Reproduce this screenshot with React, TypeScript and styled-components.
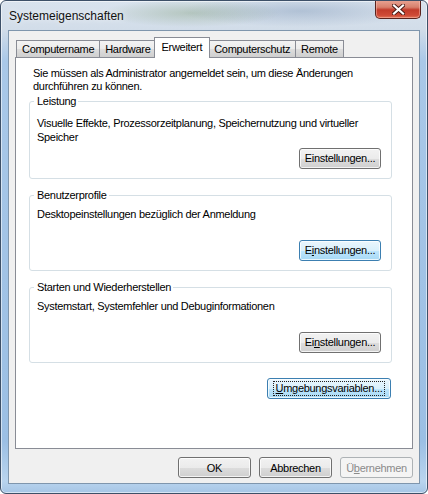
import React from "react";
import styled, { createGlobalStyle, css } from "styled-components";

const GlobalStyle = createGlobalStyle`
  html, body {
    margin: 0;
    padding: 0;
    background: #ffffff;
  }
  * {
    box-sizing: border-box;
  }
`;

const Window = styled.div`
  width: 428px;
  height: 494px;
  display: flex;
  flex-direction: column;
  border: 1px solid #3d5068;
  border-radius: 6px;
  padding: 0 7px 9px 7px;
  overflow: hidden;
  background:
    radial-gradient(ellipse 90px 14px at 190px 12px, rgba(120, 150, 110, 0.35), transparent),
    radial-gradient(ellipse 120px 16px at 300px 10px, rgba(90, 120, 160, 0.3), transparent),
    linear-gradient(to bottom, #d9e3ee 0px, #d2dde9 28px, #a9c8e8 60px, #9bbfe4 440px, #b9d4ee 480px, #a3c3e4 494px);
  box-shadow: inset 0 0 0 1px rgba(255, 255, 255, 0.55);
  font-family: "Liberation Sans", Arial, sans-serif;
  font-size: 11px;
  letter-spacing: -0.3px;
  color: #000;
`;

const TitleBar = styled.div`
  height: 29px;
  display: flex;
  align-items: flex-start;
  justify-content: space-between;
`;

const Title = styled.div`
  font-size: 12px;
  letter-spacing: 0;
  line-height: 14px;
  padding: 8px 0 0 1px;
  color: #111;
  text-shadow: 0 0 6px rgba(255, 255, 255, 0.9);
`;

const CloseButton = styled.div`
  width: 46px;
  height: 19px;
  margin-right: -1px;
  margin-top: -1px;
  display: flex;
  align-items: center;
  justify-content: center;
  border: 1px solid #5a231d;
  border-top: none;
  border-radius: 0 0 5px 5px;
  background: linear-gradient(to bottom, #eaa595 0%, #d8806c 40%, #c23b2a 55%, #cf4a36 85%, #e27658 100%);
  box-shadow: inset 0 0 0 1px rgba(255, 200, 190, 0.45);
`;

const ClientArea = styled.div`
  flex: 1;
  display: flex;
  flex-direction: column;
  background: #f0f0f0;
  border: 1px solid #7f96ad;
  padding: 6px 6px 5px 6px;
`;

const TabStrip = styled.div`
  height: 20px;
  display: flex;
  align-items: flex-end;
  padding-left: 1px;
`;

const Tab = styled.div<{ $active?: boolean }>`
  position: relative;
  height: 17px;
  margin-right: -1px;
  padding: 0 5px;
  display: flex;
  align-items: center;
  justify-content: center;
  border: 1px solid #898c95;
  border-bottom: none;
  background: linear-gradient(to bottom, #f3f3f3 0%, #ebebeb 50%, #dddddd 51%, #cfcfcf 100%);
  white-space: nowrap;
  ${(p) =>
    p.$active &&
    css`
      z-index: 2;
      height: 21px;
      margin: 0 -2px -1px -2px;
      padding: 0 7px 2px 7px;
      background: #ffffff;
    `}
`;

const Panel = styled.div`
  height: 392px;
  background: #ffffff;
  border: 1px solid #898c95;
  padding: 9px 20px 0 13px;
  display: flex;
  flex-direction: column;
`;

const Intro = styled.div`
  line-height: 13px;
  padding-left: 4px;
`;

const GroupBox = styled.div<{ $gapTop: number }>`
  margin-top: ${(p) => p.$gapTop}px;
  border: 1px solid #d5dfe5;
  border-radius: 3px;
  padding: 0 10px 9px 7px;
  display: flex;
  flex-direction: column;
`;

const Legend = styled.div`
  align-self: flex-start;
  margin: -8px 0 0 -3px;
  padding: 0 2px 0 3px;
  line-height: 14px;
  background: #ffffff;
`;

const Description = styled.div<{ $gap: number }>`
  margin-top: ${(p) => p.$gap}px;
  line-height: 14px;
`;

const ButtonRow = styled.div<{ $gap: number }>`
  margin-top: ${(p) => p.$gap}px;
  display: flex;
  justify-content: flex-end;
`;

const Button = styled.button<{ $width: number; $hot?: boolean }>`
  width: ${(p) => p.$width}px;
  height: 21px;
  padding: 0;
  font-family: inherit;
  font-size: 11px;
  letter-spacing: -0.3px;
  color: #000;
  border: 1px solid #707070;
  border-radius: 3px;
  background: linear-gradient(to bottom, #f2f2f2 0%, #ebebeb 50%, #dddddd 51%, #cfcfcf 100%);
  box-shadow: inset 0 0 0 1px rgba(255, 255, 255, 0.75);
  display: flex;
  align-items: center;
  justify-content: center;
  ${(p) =>
    p.$hot &&
    css`
      border-color: #3c7fb1;
      background: linear-gradient(to bottom, #eaf6fd 0%, #d9f0fc 50%, #bee6fd 51%, #a7d9f5 100%);
    `}
  &:disabled {
    color: #8b8b8b;
    border-color: #adb2b5;
    background: #f4f4f4;
    box-shadow: none;
  }
`;

const FocusLabel = styled.span<{ $focus?: boolean }>`
  padding: 0 2px;
  line-height: 13px;
  outline: ${(p) => (p.$focus ? "1px dotted #222" : "none")};
`;

const Key = styled.span`
  text-decoration: underline;
  text-underline-offset: 1px;
`;

const DialogButtons = styled.div`
  margin-top: 8px;
  display: flex;
  justify-content: flex-end;
  gap: 8px;
`;

const EnvRow = styled.div`
  margin-top: 15px;
  display: flex;
  justify-content: flex-end;
  padding-right: 1px;
`;

const CloseIcon = () => (
  <svg width="13" height="11" viewBox="0 0 13 11">
    <path
      d="M2 1.5 L11 9.5 M11 1.5 L2 9.5"
      stroke="#4a1a14"
      strokeWidth="4"
      strokeLinecap="square"
    />
    <path
      d="M2 1.5 L11 9.5 M11 1.5 L2 9.5"
      stroke="#ffffff"
      strokeWidth="2.2"
      strokeLinecap="square"
    />
  </svg>
);

const tabs = ["Computername", "Hardware", "Erweitert", "Computerschutz", "Remote"];

export default function App() {
  return (
    <>
      <GlobalStyle />
      <Window>
        <TitleBar>
          <Title>Systemeigenschaften</Title>
          <CloseButton>
            <CloseIcon />
          </CloseButton>
        </TitleBar>
        <ClientArea>
          <TabStrip>
            {tabs.map((t) => (
              <Tab key={t} $active={t === "Erweitert"}>
                {t}
              </Tab>
            ))}
          </TabStrip>
          <Panel>
            <Intro>
              Sie müssen als Administrator angemeldet sein, um diese Änderungen
              <br />
              durchführen zu können.
            </Intro>

            <GroupBox $gapTop={8}>
              <Legend>Leistung</Legend>
              <Description $gap={8}>
                Visuelle Effekte, Prozessorzeitplanung, Speichernutzung und virtueller
                <br />
                Speicher
              </Description>
              <ButtonRow $gap={4}>
                <Button $width={82}>
                  <FocusLabel>Einstellungen...</FocusLabel>
                </Button>
              </ButtonRow>
            </GroupBox>

            <GroupBox $gapTop={16}>
              <Legend>Benutzerprofile</Legend>
              <Description $gap={5}>Desktopeinstellungen bezüglich der Anmeldung</Description>
              <ButtonRow $gap={19}>
                <Button $width={82} $hot>
                  <FocusLabel>
                    E<Key>i</Key>nstellungen...
                  </FocusLabel>
                </Button>
              </ButtonRow>
            </GroupBox>

            <GroupBox $gapTop={16}>
              <Legend>Starten und Wiederherstellen</Legend>
              <Description $gap={5}>Systemstart, Systemfehler und Debuginformationen</Description>
              <ButtonRow $gap={19}>
                <Button $width={82}>
                  <FocusLabel>
                    Ei<Key>n</Key>stellungen...
                  </FocusLabel>
                </Button>
              </ButtonRow>
            </GroupBox>

            <EnvRow>
              <Button $width={124} $hot>
                <FocusLabel $focus>
                  <Key>U</Key>mgebungsvariablen...
                </FocusLabel>
              </Button>
            </EnvRow>
          </Panel>
          <DialogButtons>
            <Button $width={73}>OK</Button>
            <Button $width={73}>Abbrechen</Button>
            <Button $width={73} disabled>
              Ü<Key>b</Key>ernehmen
            </Button>
          </DialogButtons>
        </ClientArea>
      </Window>
    </>
  );
}
